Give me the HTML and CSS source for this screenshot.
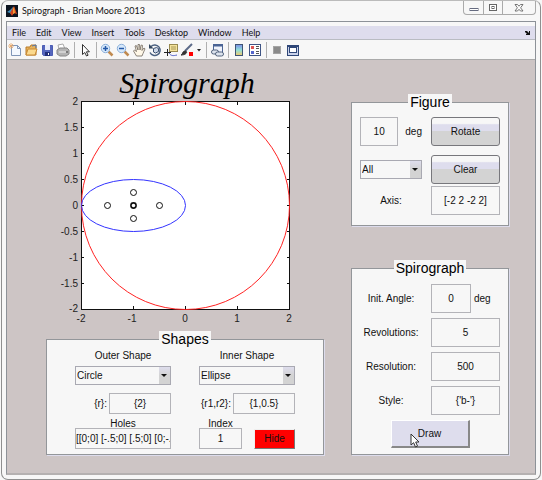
FILE: index.html
```html
<!DOCTYPE html>
<html lang="en">
<head>
<meta charset="utf-8">
<title>Spirograph - Brian Moore 2013</title>
<link rel="stylesheet" href="styles.css">
</head>
<body>
<div class="window">
  <header class="titlebar">
    <svg class="logo" viewBox="0 0 12 12" aria-hidden="true"><rect width="12" height="12" fill="#0c1420"/><path d="M1 7l3-2 3-3 1 1-3 6-1-1z" fill="#3f8fc0"/><path d="M4 8l4-7 3 8-3-1-2 3z" fill="#d5451b"/><path d="M7 4l1-2 1 6-2 1z" fill="#f4a03a"/></svg>
    <span class="title">Spirograph - Brian Moore 2013</span>
    <div class="winbtns">
      <button type="button" aria-label="Minimize"><svg width="10" height="8" viewBox="0 0 10 8"><rect x="1" y="4.500" width="8" height="2" fill="#fff" stroke="#666b80"/></svg></button>
      <button type="button" aria-label="Maximize"><svg width="10" height="8" viewBox="0 0 10 8"><rect x="1.500" y=".5" width="7" height="6" fill="#fff" stroke="#666"/><rect x="4" y="2.500" width="2" height="2" fill="#fff" stroke="#666"/></svg></button>
      <button type="button" class="wide" aria-label="Close"><svg width="10" height="8" viewBox="0 0 10 8"><path d="M1 .5h2.500L5 2.200 6.500.5H9L6.600 3.800 9 7H6.500L5 5.300 3.500 7H1l2.400-3.200z" fill="#fff" stroke="#666" stroke-width=".9"/></svg></button>
    </div>
  </header>
  <main class="client">
    <nav class="menu">
      <a href="#">File</a><a href="#">Edit</a><a href="#">View</a><a href="#">Insert</a><a href="#">Tools</a><a href="#">Desktop</a><a href="#">Window</a><a href="#">Help</a>
      <svg class="dock" viewBox="0 0 6 6" aria-hidden="true"><path d="M0 1h2l2 2V1h1v4H1V4h1L0 2z" fill="#111"/></svg>
    </nav>
    <div class="toolbar">
      <button type="button" aria-label="New"><svg viewBox="0 0 14 14"><path d="M3.500 2.500h6l3 3v7h-9z" fill="#f4f9ff" stroke="#7f96b8"/><path d="M9.500 2.500v3h3" fill="none" stroke="#7f96b8"/><path d="M3 0v6M0 3h6M1 1l4 4M5 1L1 5" stroke="#e8a868" stroke-width=".8"/></svg></button>
      <button type="button" aria-label="Open"><svg viewBox="0 0 14 14"><path d="M2 12V4h4l1-2h5v10z" fill="#e9b45c" stroke="#b87a28"/><path d="M8 3l4-1v3" fill="none" stroke="#5578b0"/><path d="M2 12l2-6h9l-2 6z" fill="#fbd98d" stroke="#c98a35"/></svg></button>
      <button type="button" aria-label="Save"><svg viewBox="0 0 14 14"><path d="M2.500 2.500h10v10h-9l-1-1z" fill="#5566bd" stroke="#4c5db4"/><path d="M5 2h5v5H5z" fill="#e8ecfa"/><path d="M5 9h5v4H5z" fill="#222f78"/><path d="M8 10h1v2H8z" fill="#fff"/></svg></button>
      <button type="button" aria-label="Print"><svg viewBox="0 0 14 14"><path d="M3 6l-1-4 5-1 2 5z" fill="#fff" stroke="#aaa"/><path d="M1 7l3-2h7l2 2v4l-3 2H4L1 11z" fill="#b4b4b4" stroke="#888"/><path d="M3 9h7" stroke="#eee"/><circle cx="11" cy="9" r="1" fill="#666"/></svg></button>
      <i></i>
      <button type="button" aria-label="Select"><svg viewBox="0 0 14 14"><path d="M4.500 1.500v10l2.300-2 1.700 3.500 1.600-.8-1.700-3.400h3z" fill="#fff" stroke="#333"/></svg></button>
      <i></i>
      <button type="button" aria-label="Zoom in"><svg viewBox="0 0 14 14"><path d="M8.500 8.500l4 4" stroke="#c08a50" stroke-width="2.500"/><circle cx="5.500" cy="5.500" r="4.200" fill="#d6e8fa" stroke="#8db0da"/><path d="M3 5.500h5M5.500 3v5" stroke="#2559a8" stroke-width="1.500"/></svg></button>
      <button type="button" aria-label="Zoom out"><svg viewBox="0 0 14 14"><path d="M8.500 8.500l4 4" stroke="#c08a50" stroke-width="2.500"/><circle cx="5.500" cy="5.500" r="4.200" fill="#d6e8fa" stroke="#8db0da"/><path d="M3 5.500h5" stroke="#2559a8" stroke-width="1.500"/></svg></button>
      <button type="button" aria-label="Pan"><svg viewBox="0 0 14 14"><path d="M4.500 13L1.500 8l1-1 2 1.500L3 3l1.300-.5L6 7V1.500h1.500L8 7l1.200-5 1.300.4L10 7.500 12 5l1 .8-2 4.700L10 13z" fill="#fff8e8" stroke="#6d655a" stroke-width=".8"/></svg></button>
      <button type="button" aria-label="Rotate 3D"><svg viewBox="0 0 14 14"><path d="M3 3.500a5.300 5.300 0 1 1-1 6" fill="none" stroke="#4a6080" stroke-width="1.500"/><path d="M1 1v4.500h4.500z" fill="#33475f"/><path d="M5.500 5.500l3-1 2 1v3l-3 1.500-2-1z" fill="#cdd8e8" stroke="#3b4f70"/></svg></button>
      <button type="button" aria-label="Data cursor"><svg viewBox="0 0 14 14"><rect x="5.500" y="1.500" width="8" height="7" fill="#f4e39c" stroke="#988a50"/><path d="M7 4h5M7 6h5" stroke="#a89858"/><path d="M0 9.500h7M3.500 6v7" stroke="#222"/><path d="M5 10c2 3 4 3 8 2" fill="none" stroke="#5260c8"/></svg></button>
      <button type="button" aria-label="Brush"><svg viewBox="0 0 14 14"><path d="M5 8l7-7" stroke="#5b6a88" stroke-width="2"/><path d="M1 12c2 0 1-4 4-4s2 4-4 4z" fill="#333" stroke="#333"/><rect x="9" y="9" width="4" height="4" fill="#f00"/></svg></button>
      <button type="button" class="slim" aria-label="Brush options"><svg viewBox="0 0 6 14"><path d="M1 6h4L3 8.500z" fill="#222"/></svg></button>
      <i></i>
      <button type="button" aria-label="Link plots"><svg viewBox="0 0 14 14"><rect x="3.500" y="1.500" width="9" height="8" fill="#eef2fb" stroke="#4a6494"/><path d="M3 2.500h10" stroke="#4a6494" stroke-width="2"/><rect x="1.500" y="7" width="7" height="4" rx="2" fill="#dde4ee" stroke="#52637c"/><rect x="5.500" y="9" width="8" height="4" rx="2" fill="#dde4ee" stroke="#52637c"/></svg></button>
      <i></i>
      <button type="button" aria-label="Colorbar"><svg viewBox="0 0 14 14"><defs><linearGradient id="cb" x2="0" y2="1"><stop stop-color="#7b8ce8"/><stop offset=".5" stop-color="#8fe0d8"/><stop offset="1" stop-color="#f3c96b"/></linearGradient></defs><rect x="3.500" y="1.500" width="7" height="11" fill="url(#cb)" stroke="#3e5474"/></svg></button>
      <button type="button" aria-label="Legend"><svg viewBox="0 0 14 14"><rect x="1.500" y="1.500" width="11" height="11" fill="#fff" stroke="#3e5484"/><path d="M3 3h3v3H3z" fill="#d55"/><path d="M3 8h3v3H3z" fill="#56c"/><path d="M8 3.500h3M8 5.500h3M8 8.500h3M8 10.500h3" stroke="#555"/></svg></button>
      <i></i>
      <button type="button" aria-label="Hide plot tools"><svg viewBox="0 0 14 14"><rect x="3.500" y="3.500" width="7" height="7" fill="#8b8b8b" stroke="#a4a4a4"/></svg></button>
      <button type="button" aria-label="Show plot tools"><svg viewBox="0 0 14 14"><rect x="1.500" y="2.500" width="11" height="10" fill="#c9d2ea" stroke="#2f4778"/><path d="M1 3h12" stroke="#2f4778" stroke-width="2"/><rect x="3.500" y="4.500" width="7" height="5" fill="#fff" stroke="#2f4778"/></svg></button>
    </div>
    <div class="canvas">
      <section class="left">
        <h1>Spirograph</h1>
        <svg class="plot" viewBox="0 0 278 228" role="img" aria-label="Circle with an inner ellipse">
          <rect x="35.500" y="4.500" width="208" height="208" fill="#fff" stroke="#111"/>
          <path d="M87.500 5v3M139.500 5v3M191.500 5v3M87.500 212v-3M139.500 212v-3M191.500 212v-3M36 30.500h2M36 56.500h2M36 82.500h2M36 108.500h2M36 134.500h2M36 160.500h2M36 186.500h2M243 30.500h-2M243 56.500h-2M243 82.500h-2M243 108.500h-2M243 134.500h-2M243 160.500h-2M243 186.500h-2" stroke="#111"/>
          <circle cx="139.500" cy="108.500" r="104" fill="none" stroke="#f22"/>
          <ellipse cx="87.500" cy="108.500" rx="52" ry="26" fill="none" stroke="#33f"/>
          <g fill="none" stroke="#111"><circle cx="87.500" cy="108.500" r="2.600" stroke-width="1.600"/><circle cx="61.500" cy="108.500" r="3"/><circle cx="113.500" cy="108.500" r="3"/><circle cx="87.500" cy="95.500" r="3"/><circle cx="87.500" cy="121.500" r="3"/></g>
          <g class="ylab"><text x="32" y="8">2</text><text x="32" y="34">1.5</text><text x="32" y="60">1</text><text x="32" y="86">0.5</text><text x="32" y="112">0</text><text x="32" y="138">-0.5</text><text x="32" y="164">-1</text><text x="32" y="190">-1.5</text><text x="32" y="215">-2</text></g>
          <g class="xlab"><text x="35" y="225">-2</text><text x="86" y="225">-1</text><text x="139" y="225">0</text><text x="191" y="225">1</text><text x="243" y="225">2</text></g>
        </svg>
        <fieldset class="shapes">
          <legend>Shapes</legend>
          <div class="pair">
            <div class="shape">
              <label for="outer">Outer Shape</label>
              <span class="drop"><select id="outer"><option>Circle</option></select></span>
              <div class="param"><label for="r">{r}:</label><input id="r" value="{2}"></div>
              <label class="tight" for="holes">Holes</label>
              <input id="holes" class="long" value="[[0;0] [-.5;0] [.5;0] [0;-.25] [0;.25]]">
            </div>
            <div class="shape">
              <label for="inner">Inner Shape</label>
              <span class="drop"><select id="inner"><option>Ellipse</option></select></span>
              <div class="param"><label for="r12">{r1,r2}:</label><input id="r12" value="{1,0.5}"></div>
              <div class="last">
                <div class="index"><label class="tight" for="index">Index</label><input id="index" value="1"></div>
                <button type="button" class="hide">Hide</button>
              </div>
            </div>
          </div>
        </fieldset>
      </section>
      <section class="right">
        <fieldset class="figure">
          <legend>Figure</legend>
          <div class="row"><span class="cell angle"><input id="deg" value="10"><label for="deg">deg</label></span><button type="button" class="glossy">Rotate</button></div>
          <div class="row"><span class="drop cell"><select aria-label="Clear target"><option>All</option></select></span><button type="button" class="glossy">Clear</button></div>
          <div class="row axis"><label class="cell" for="axis">Axis:</label><input id="axis" value="[-2 2 -2 2]"></div>
        </fieldset>
        <fieldset class="spiro">
          <legend>Spirograph</legend>
          <div class="row"><label class="cell" for="init">Init. Angle:</label><span class="unit"><input id="init" value="0"><span>deg</span></span></div>
          <div class="row"><label class="cell" for="rev">Revolutions:</label><input id="rev" value="5"></div>
          <div class="row"><label class="cell" for="res">Resolution:</label><input id="res" value="500"></div>
          <div class="row"><label class="cell" for="style">Style:</label><input id="style" value="{'b-'}"></div>
          <button type="button" class="draw">Draw<svg class="pointer" viewBox="0 0 10 15" aria-hidden="true"><path d="M1 1v11l2.600-2.300L5.500 14l2-.9L5.700 9H9z" fill="#fff" stroke="#333"/></svg></button>
        </fieldset>
      </section>
    </div>
  </main>
</div>
</body>
</html>
```
FILE: styles.css
```css
* { box-sizing: border-box; }
body { margin: 0; background: #f7f7f7; color: #111; font: 10px/14px "Liberation Sans", Arial, sans-serif; }
button, input, select { font: inherit; color: inherit; margin: 0; padding: 0; }
.window { min-height: 100vh; padding: 0 4px 4px; margin: 0 1px; border: 1px solid #8f8f8f; border-top-color: #bbb; border-radius: 7px; display: flex; flex-direction: column; }
.titlebar { display: flex; align-items: center; height: 20px; font: 9px/14px Lato, sans-serif; }
.logo { width: 12px; height: 12px; }
.title { flex: 1; margin-left: 4px; white-space: nowrap; }
.winbtns { display: flex; align-self: flex-start; border: 1px solid #aaa; border-top: 0; border-radius: 0 0 4px 4px; }
.winbtns button { width: 19px; height: 13px; border: 0; background: none; display: grid; place-items: center; }
.winbtns button + button { border-left: 1px solid #aaa; }
.winbtns .wide { width: 33px; }
.client { flex: 1; display: flex; flex-direction: column; border: 1px solid #8d9298; border-bottom: 2px solid #b5b1b1; }
.menu { display: flex; align-items: center; gap: 10px; height: 14px; margin-top: 4px; padding: 0 4px 0 5px; background: #dedded; border-bottom: 1px solid #b9bcc2; font: 9px/12px Lato, sans-serif; }
.menu a { color: inherit; text-decoration: none; }
.dock { width: 6px; height: 6px; margin-left: auto; }
.toolbar { display: flex; align-items: center; gap: 2px; height: 20px; padding: 0 1px; border-bottom: 1px solid #aaa; }
.toolbar button { width: 14px; height: 14px; border: 0; background: none; }
.toolbar .slim { width: 6px; }
.toolbar svg { display: block; width: 100%; height: 100%; }
.toolbar i { width: 1px; height: 16px; margin: 0 1px 0 2px; background: #b0b0b0; }
.canvas { flex: 1; display: grid; grid-template-columns: 278fr 158fr; gap: 27px; padding: 0 26px 18px 39px; background: #cdc5c5; }
h1 { margin: 0; height: 37px; padding: 8px 0 0 4px; text-align: center; font: italic 30px/30px "Lucida Handwriting", "Liberation Serif", serif; color: #000; }
.plot { display: block; width: 100%; font-size: 10px; }
.plot text { fill: #222; }
.ylab { text-anchor: end; }
.xlab { text-anchor: middle; }
fieldset { min-width: 0; margin: 0; border: 1px solid #93969a; padding: 0 8px 6px; background: #f7f7f7; box-shadow: 1px 1px 0 #dddcec; }
legend { margin: 0 auto; padding: 0 2px; background: #f7f7f7; color: #000; font-size: 14px; line-height: 16px; }
input { width: 100%; min-width: 0; border: 1px solid #b3b3b8; background: #f7f7f7; text-align: center; border-radius: 0; }
.drop { position: relative; display: block; }
.drop select { appearance: none; display: block; width: 100%; height: 19px; padding: 0 0 0 1px; border: 1px solid #a9a9b2; border-radius: 0; background: linear-gradient(#dedded, #d3d3d3 50%) right / 11px 100% no-repeat #f7f7f7; }
.drop::after { content: ""; position: absolute; right: 4px; top: 8px; border: 3px solid transparent; border-top-color: #111; border-bottom: 0; pointer-events: none; }
.shapes { margin-top: 6px; padding: 0 28px 5px; }
.pair { display: grid; grid-template-columns: 1fr 1fr; gap: 28px; }
.shape { display: flex; flex-direction: column; text-align: center; }
.shape > label:first-child { height: 19px; line-height: 18px; }
.param { display: flex; align-items: center; justify-content: flex-end; gap: 2px; margin: 8px 0 4px; }
.param input { width: 62px; height: 21px; }
.tight { display: block; height: 10px; line-height: 12px; }
.shape input { height: 21px; }
.shape .long { text-align: left; }
.last { display: flex; justify-content: space-between; align-items: flex-end; }
.index { width: 43px; }
.index input { display: block; }
.hide { width: 41px; height: 20px; border: 1px solid #eee; border-right-color: #777; border-bottom-color: #777; background: #f00; }
.right { padding-top: 34px; }
.row { display: grid; grid-template-columns: 62px 1fr; gap: 9px; align-items: center; }
.row input { height: 29px; }
.figure .row { margin-top: 9px; }
.figure .row:first-of-type { margin-top: 7px; }
.figure .axis { margin-top: 2px; }
.figure { padding-bottom: 10px; }
.axis .cell, .spiro .cell { text-align: center; white-space: nowrap; }
.angle { display: flex; align-items: center; gap: 7px; }
.angle input { width: 39px; }
.glossy { height: 29px; border: 1px solid #77777c; border-radius: 3px; background: linear-gradient(#f7f7f7 20%, #dedded 25%, #dedded 50%, #d3d3d3 50%); }
.spiro { margin-top: 34px; padding-bottom: 6px; }
.spiro .row { margin-top: 5px; }
.spiro .row:first-of-type { margin-top: 8px; }
.unit { display: flex; align-items: center; gap: 3px; }
.unit input { width: 40px; }
.draw { position: relative; display: block; width: 79px; height: 28px; margin: 5px auto 0; border: 1px solid #fff; border-right: 2px solid #888; border-bottom: 2px solid #888; background: #dedded; }
.pointer { position: absolute; left: 18px; top: 12px; width: 10px; height: 15px; }
```
